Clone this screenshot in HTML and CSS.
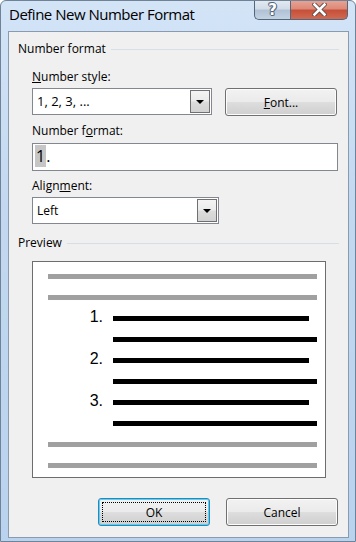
FILE: index.html
```html
<!DOCTYPE html>
<html lang="en">

<head>
  <meta charset="UTF-8" />
  <meta name="viewport" content="width=device-width, initial-scale=1.0" />
  <title>Define New Number Format</title>
  <link rel="stylesheet" href="styles.css">
</head>

<body>
  <div class="window">
    <div class="titlebar">
      <span class="title">Define New Number Format</span>
      <div class="caption-buttons">
        <span class="cap-btn help-btn">?</span>
        <span class="cap-btn close-btn">
          <svg width="15" height="13" viewBox="0 0 15 13">
            <path d="M2.5 1.5 L12.5 11.5 M12.5 1.5 L2.5 11.5" stroke="#5a4a48" stroke-width="4.4" stroke-linecap="square" fill="none" />
            <path d="M2.5 1.5 L12.5 11.5 M12.5 1.5 L2.5 11.5" stroke="#ffffff" stroke-width="2.6" stroke-linecap="square" fill="none" />
          </svg>
        </span>
      </div>
    </div>

    <div class="client">
      <div class="group-head">
        <span>Number format</span>
        <span class="rule"></span>
      </div>

      <div class="fields">
        <div class="label label-first"><u>N</u>umber style:</div>
        <div class="style-row">
          <div class="combo combo-style">
            <span class="combo-text combo-text-big">1, 2, 3, ...</span>
            <span class="combo-btn"><span class="arrow"></span></span>
          </div>
          <button class="btn font-btn"><u>F</u>ont...</button>
        </div>

        <div class="label">Number f<u>o</u>rmat:</div>
        <div class="textbox"><span class="sel">1</span>.</div>

        <div class="label">Align<u>m</u>ent:</div>
        <div class="combo combo-align">
          <span class="combo-text">Left</span>
          <span class="combo-btn"><span class="arrow"></span></span>
        </div>
      </div>

      <div class="group-head preview-head">
        <span>Preview</span>
        <span class="rule"></span>
      </div>

      <div class="preview">
        <div class="pv-row"><span class="bar gray"></span></div>
        <div class="pv-row"><span class="bar gray"></span></div>
        <div class="pv-row"><span class="num">1.</span><span class="bar short"></span></div>
        <div class="pv-row"><span class="num"></span><span class="bar long"></span></div>
        <div class="pv-row"><span class="num">2.</span><span class="bar short"></span></div>
        <div class="pv-row"><span class="num"></span><span class="bar long"></span></div>
        <div class="pv-row"><span class="num">3.</span><span class="bar short"></span></div>
        <div class="pv-row"><span class="num"></span><span class="bar long"></span></div>
        <div class="pv-row"><span class="bar gray"></span></div>
        <div class="pv-row"><span class="bar gray"></span></div>
      </div>

      <div class="buttons">
        <button class="btn ok-btn"><span class="focus-rect">OK</span></button>
        <button class="btn cancel-btn">Cancel</button>
      </div>
    </div>
  </div>
</body>

</html>
```

FILE: styles.css
```css
body {
  margin: 0;
  font-family: "Open Sans", "Noto Sans", sans-serif;
  background-color: #ffffff;
}

.window {
  width: 356px;
  height: 542px;
  box-sizing: border-box;
  border: 1px solid #6f8296;
  border-radius: 6px 6px 0 0;
  background: linear-gradient(to bottom, #d3e4f7 0%, #c2d8f0 40%, #b9d2ee 100%);
  overflow: hidden;
}

.titlebar {
  height: 30px;
  display: flex;
  align-items: flex-start;
  padding-left: 8px;
}

.title {
  font-size: 15px;
  line-height: 20px;
  padding-top: 3px;
  letter-spacing: -0.5px;
  color: #000000;
}

.caption-buttons {
  display: flex;
  margin-left: auto;
  margin-right: 7px;
  margin-top: -1px;
}

.cap-btn {
  height: 20px;
  box-sizing: border-box;
  display: flex;
  align-items: center;
  justify-content: center;
  border: 1px solid #55657a;
  border-top: none;
}

.help-btn {
  width: 36px;
  border-radius: 0 0 0 5px;
  border-right: none;
  background: linear-gradient(to bottom, #e4ebf3 0%, #d2dde9 45%, #b1c2d6 55%, #c4d3e3 100%);
  color: #ffffff;
  font-family: "DejaVu Sans", sans-serif;
  font-weight: bold;
  font-size: 15px;
  line-height: 18px;
  text-shadow: 1px 0 0 #56667a, -1px 0 0 #56667a, 0 1px 0 #56667a, 0 -1px 0 #56667a, 1px 1px 0 #7d8da0, -1px -1px 0 #7d8da0;
}

.close-btn {
  width: 58px;
  border-radius: 0 0 5px 0;
  background: linear-gradient(to bottom, #e8a596 0%, #de8a79 45%, #c7503a 55%, #d06a52 100%);
}

.client {
  width: 341px;
  height: 507px;
  margin-left: 7px;
  box-sizing: border-box;
  border: 1px solid #8a9bb0;
  background-color: #f0f0f0;
  font-size: 12px;
  line-height: 16px;
  color: #000000;
}

.group-head {
  display: flex;
  align-items: center;
  margin-top: 9px;
  height: 16px;
  padding-left: 9px;
  padding-right: 9px;
}

.group-head .rule {
  flex: 1;
  height: 1px;
  margin-left: 5px;
  background-color: #d5dfe5;
}

.preview-head {
  margin-top: 11px;
}

.fields {
  padding-left: 23px;
}

.label {
  margin-top: 7px;
  height: 16px;
}

.label-first {
  margin-top: 12px;
}

.style-row {
  display: flex;
  align-items: flex-start;
  margin-top: 3px;
}

.combo {
  display: flex;
  box-sizing: border-box;
  height: 27px;
  border: 1px solid #828790;
  background-color: #ffffff;
  padding: 1px;
}

.combo-style {
  width: 180px;
}

.combo-align {
  width: 187px;
  margin-top: 3px;
}

.combo-text {
  flex: 1;
  padding-left: 3px;
  line-height: 23px;
}

.combo-text-big {
  font-size: 13px;
}

.combo-btn {
  width: 20px;
  box-sizing: border-box;
  border: 1px solid #707070;
  background: linear-gradient(to bottom, #f4f4f4 0%, #ebebeb 48%, #dcdcdc 52%, #d2d2d2 100%);
  display: flex;
  align-items: center;
  justify-content: center;
}

.arrow {
  width: 0;
  height: 0;
  border-left: 4px solid transparent;
  border-right: 4px solid transparent;
  border-top: 4px solid #000000;
}

.btn {
  box-sizing: border-box;
  height: 28px;
  border: 1px solid #707070;
  border-radius: 3px;
  background: linear-gradient(to bottom, #f2f2f2 0%, #ebebeb 48%, #dddddd 52%, #cfcfcf 100%);
  box-shadow: inset 0 0 0 1px #fcfcfc;
  font-family: "Open Sans", "Noto Sans", sans-serif;
  font-size: 12px;
  color: #000000;
  padding: 0;
}

.font-btn {
  width: 112px;
  margin-left: 13px;
}

.textbox {
  box-sizing: border-box;
  width: 306px;
  height: 28px;
  margin-top: 4px;
  border: 1px solid #828790;
  background-color: #ffffff;
  padding: 2px 0 0 2px;
  font-size: 16px;
  line-height: 20px;
}

.sel {
  background-color: #c6c6c6;
  padding: 0 1px;
}

.preview {
  box-sizing: border-box;
  width: 294px;
  height: 217px;
  margin-top: 10px;
  margin-left: 23px;
  border: 1px solid #6d6d6d;
  background-color: #ffffff;
  padding: 2px 0 0 15px;
}

.pv-row {
  display: flex;
  align-items: flex-start;
  height: 21px;
}

.bar {
  display: block;
  height: 5px;
  margin-top: 10px;
  background-color: #000000;
}

.bar.gray {
  width: 269px;
  background-color: #a0a0a0;
}

.bar.short {
  width: 196px;
}

.bar.long {
  width: 204px;
}

.num {
  width: 65px;
  box-sizing: border-box;
  padding-right: 10px;
  text-align: right;
  font-family: "Liberation Sans", Arial, sans-serif;
  font-size: 16px;
  line-height: 21px;
}

.buttons {
  display: flex;
  justify-content: flex-end;
  gap: 16px;
  margin-top: 20px;
  padding-right: 10px;
}

.ok-btn,
.cancel-btn {
  width: 112px;
}

.ok-btn {
  border-color: #3c7fb1;
  box-shadow: inset 0 0 0 1px #48d8fb;
  padding: 3px;
}

.focus-rect {
  display: flex;
  align-items: center;
  justify-content: center;
  height: 100%;
  box-sizing: border-box;
  border: 1px dotted #000000;
}
```
